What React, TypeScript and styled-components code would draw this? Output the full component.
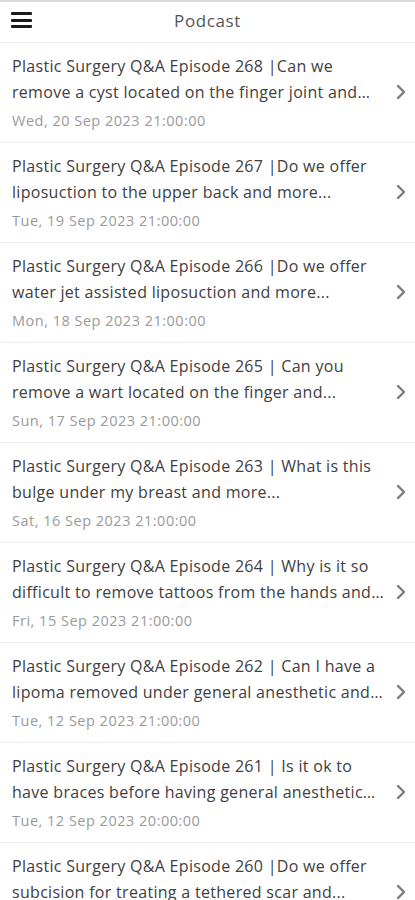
import styled, { createGlobalStyle } from 'styled-components';

const GlobalStyle = createGlobalStyle`
  html, body {
    margin: 0;
    padding: 0;
    background: #ffffff;
    font-family: 'Open Sans', 'Liberation Sans', sans-serif;
  }
`;

const Page = styled.div`
  width: 415px;
  min-height: 900px;
  border-top: 2px solid #d9d9d9;
  box-sizing: border-box;
`;

const Header = styled.header`
  position: relative;
  display: flex;
  align-items: center;
  justify-content: center;
  height: 41px;
  padding-bottom: 4px;
  box-sizing: border-box;
  border-bottom: 1px solid #ebebeb;
`;

const MenuButton = styled.button`
  position: absolute;
  left: 11px;
  top: 10px;
  display: flex;
  flex-direction: column;
  justify-content: space-between;
  width: 21px;
  height: 16px;
  padding: 0;
  border: none;
  background: none;

  span {
    display: block;
    height: 3px;
    border-radius: 1px;
    background: #1a1a1a;
  }
`;

const Title = styled.h1`
  margin: 0;
  font-size: 17px;
  font-weight: 400;
  color: #555555;
  letter-spacing: 0.6px;
`;

const List = styled.ul`
  margin: 0;
  padding: 0;
  list-style: none;
`;

const Item = styled.li`
  display: flex;
  align-items: flex-start;
  height: 100px;
  box-sizing: border-box;
  padding: 10px 4px 0 12px;
  border-bottom: 1px solid #ececec;
`;

const Body = styled.div`
  flex: 1;
  min-width: 0;
`;

const EpisodeTitle = styled.div`
  font-size: 16px;
  line-height: 26px;
  letter-spacing: 0.3px;
  color: #404040;
  display: -webkit-box;
  -webkit-line-clamp: 2;
  -webkit-box-orient: vertical;
  overflow: hidden;
`;

const EpisodeDate = styled.div`
  margin-top: 4px;
  font-size: 14.5px;
  line-height: 24px;
  letter-spacing: 0.5px;
  color: #9a9a9a;
`;

const Chevron = styled.div`
  flex-shrink: 0;
  display: flex;
  align-items: center;
  justify-content: center;
  width: 20px;
  height: 26px;
  margin-top: 26px;
  color: #7a7a7a;
`;

const episodes = [
  { title: 'Plastic Surgery Q&A Episode 268 |Can we remove a cyst located on the finger joint and more', date: 'Wed, 20 Sep 2023 21:00:00' },
  { title: 'Plastic Surgery Q&A Episode 267 |Do we offer liposuction to the upper back and more...', date: 'Tue, 19 Sep 2023 21:00:00' },
  { title: 'Plastic Surgery Q&A Episode 266 |Do we offer water jet assisted liposuction and more...', date: 'Mon, 18 Sep 2023 21:00:00' },
  { title: 'Plastic Surgery Q&A Episode 265 | Can you remove a wart located on the finger and...', date: 'Sun, 17 Sep 2023 21:00:00' },
  { title: 'Plastic Surgery Q&A Episode 263 | What is this bulge under my breast and more...', date: 'Sat, 16 Sep 2023 21:00:00' },
  { title: 'Plastic Surgery Q&A Episode 264 | Why is it so difficult to remove tattoos from the hands and more', date: 'Fri, 15 Sep 2023 21:00:00' },
  { title: 'Plastic Surgery Q&A Episode 262 | Can I have a lipoma removed under general anesthetic and more', date: 'Tue, 12 Sep 2023 21:00:00' },
  { title: 'Plastic Surgery Q&A Episode 261 | Is it ok to have braces before having general anesthetic and more', date: 'Tue, 12 Sep 2023 20:00:00' },
  { title: 'Plastic Surgery Q&A Episode 260 |Do we offer subcision for treating a tethered scar and...', date: 'Mon, 11 Sep 2023 21:00:00' },
];

function ChevronIcon() {
  return (
    <svg width='10' height='16' viewBox='0 0 10 16' fill='none'>
      <path d='M2 2l6 6-6 6' stroke='currentColor' strokeWidth='2.4' strokeLinecap='round' strokeLinejoin='round' />
    </svg>
  );
}

function App() {
  return (
    <>
      <GlobalStyle />
      <Page>
        <Header>
          <MenuButton aria-label='menu'>
            <span />
            <span />
            <span />
          </MenuButton>
          <Title>Podcast</Title>
        </Header>
        <List>
          {episodes.map((ep) => (
            <Item key={ep.title}>
              <Body>
                <EpisodeTitle>{ep.title}</EpisodeTitle>
                <EpisodeDate>{ep.date}</EpisodeDate>
              </Body>
              <Chevron>
                <ChevronIcon />
              </Chevron>
            </Item>
          ))}
        </List>
      </Page>
    </>
  );
}

export default App;
